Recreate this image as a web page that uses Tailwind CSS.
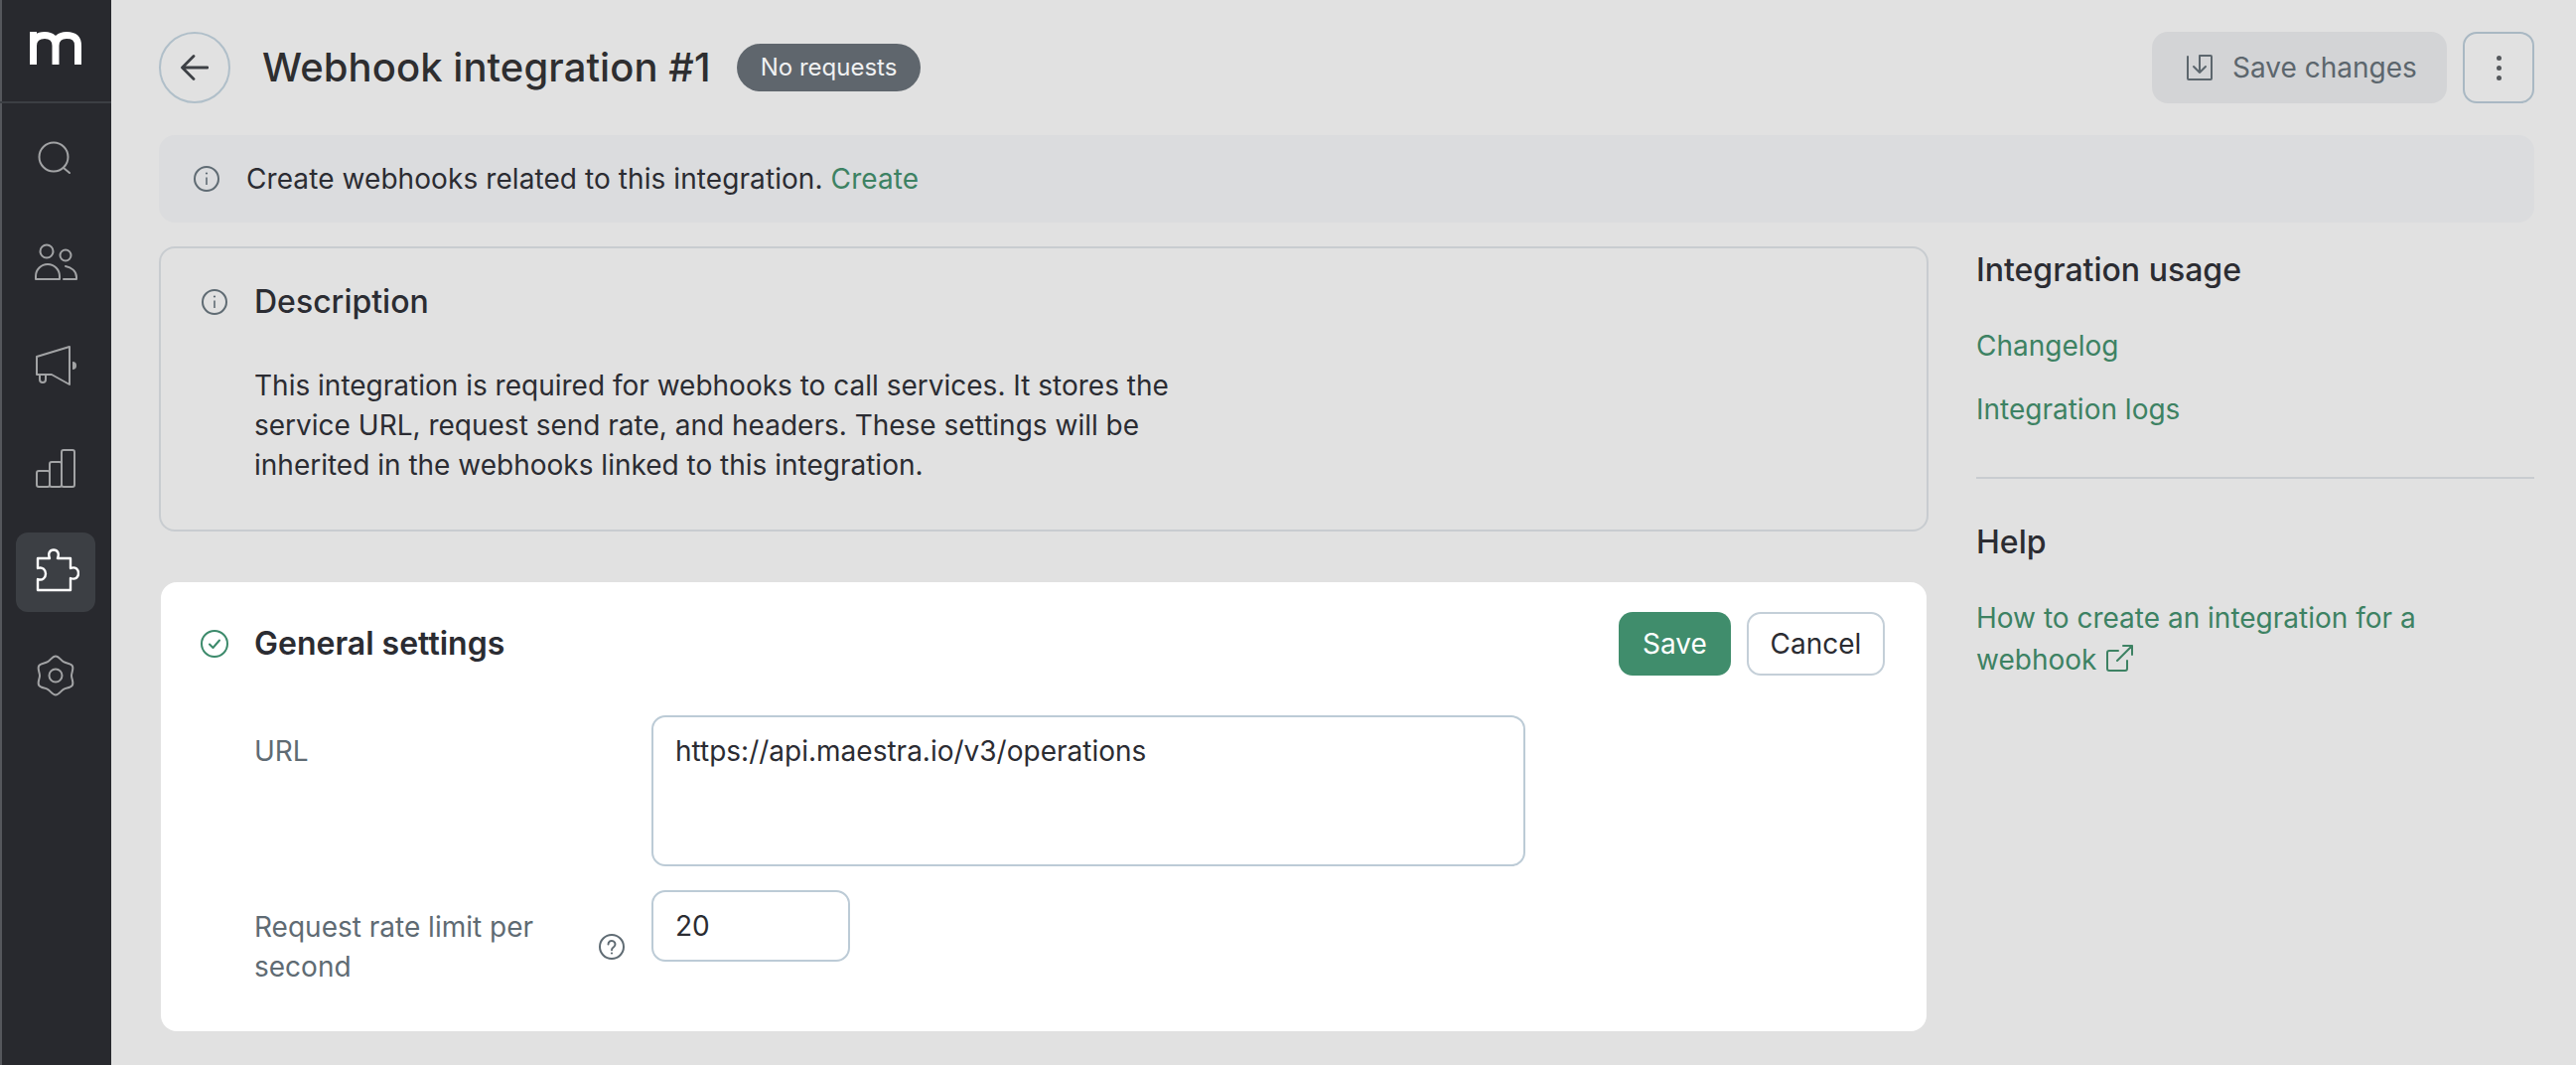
<!DOCTYPE html>
<html lang="en">
<head>
    <meta charset="UTF-8">
    <meta name="viewport" content="width=device-width, initial-scale=1.0">
    <script src="https://cdn.jsdelivr.net/npm/@tailwindcss/browser@4"></script>
    <title>Webhook integration #1</title>
</head>
<body class="font-['Inter',sans-serif] bg-[#e1e1e1] text-[#2b2c32] text-[28px] leading-[40px] h-[1072px] overflow-hidden">
    <div class="flex h-[1072px]">
        <!--sidebar-->
        <aside class="w-[112px] shrink-0 bg-[#28292e] border-l-2 border-[#55575c] flex flex-col">
            <div class="h-[104px] shrink-0 border-b-2 border-[#3c3f44] -ml-[2px] pl-[30px] pt-[32px]">
                <svg class="w-[52px] h-[33px]" viewBox="0 0 52 33" fill="none" stroke="#ffffff" stroke-width="7"><path d="M3.5 33 V0 M3.5 14 C3.5 6 9 3.5 15 3.5 C22 3.5 26 7 26 14 V33 M26 14 C26 7 30 3.5 37 3.5 C44 3.5 48.500 6 48.500 14 V33"/></svg>
            </div>
            <nav class="text-[#a2a3a5] -ml-[2px]">
                <div class="h-[64px] mt-[22px] flex justify-center items-center">
                    <svg class="w-[40px] h-[40px]" viewBox="0 0 40 40" fill="none" stroke="currentColor" stroke-width="2" stroke-linecap="round"><circle cx="18" cy="20" r="14.5"/><path d="M28 31 L34 36"/></svg>
                </div>
                <div class="h-[64px] mt-[43px] flex justify-center items-center">
                    <svg class="w-[48px] h-[48px]" viewBox="0 0 48 48" fill="none" stroke="currentColor" stroke-width="2" stroke-linecap="round" stroke-linejoin="round"><circle cx="15" cy="12" r="6.5"/><circle cx="34" cy="16" r="5.5"/><path d="M4 40 V37 a12 12 0 0 1 24 0 V40 Z"/><path d="M32 40 H45 V38 C45 32 40 28 34 27"/></svg>
                </div>
                <div class="h-[64px] mt-[39px] flex justify-center items-center">
                    <svg class="w-[48px] h-[48px]" viewBox="0 0 48 48" fill="none" stroke="currentColor" stroke-width="2" stroke-linecap="round" stroke-linejoin="round"><path d="M5 15 L38 5 V43 L20 33 H5 Z"/><path d="M8 33 V38 a3 3 0 0 0 6 0 V33"/><path d="M41 20 a4 4 0 0 1 0 8 Z" fill="currentColor" stroke="none"/></svg>
                </div>
                <div class="h-[64px] mt-[40px] flex justify-center items-center">
                    <svg class="w-[48px] h-[48px]" viewBox="0 0 48 48" fill="none" stroke="currentColor" stroke-width="2" stroke-linejoin="round"><rect x="5" y="26" width="13" height="16" rx="2"/><rect x="18" y="17" width="12" height="25" rx="2"/><rect x="30" y="5" width="13" height="37" rx="2"/></svg>
                </div>
                <div class="mx-[16px] mt-[32px] h-[80px] rounded-[12px] bg-[#3c3f44] flex justify-center items-center text-white">
                    <svg class="w-[48px] h-[48px]" viewBox="0 0 48 48" fill="none" stroke="currentColor" stroke-width="2.4" stroke-linejoin="round"><path d="M6 10 H18 C16 5 18 1.5 22 1.5 C26 1.5 28 5 26 10 H39 V20 C44 18 47 21 47 25 C47 29 44 32 39 30 V42 H6 V31 C11 33 14 29 14 25.5 C14 22 11 18 6 20 Z"/></svg>
                </div>
                <div class="h-[64px] mt-[32px] flex justify-center items-center">
                    <svg class="w-[48px] h-[48px]" viewBox="0 0 48 48" fill="none" stroke="currentColor" stroke-width="2" stroke-linejoin="round"><path d="M24 4.5 C27.2 4.5 29.23 8.54 32 10.14 C34.77 11.74 39.29 11.48 40.89 14.25 C42.49 17.02 40 20.8 40 24 C40 27.2 42.49 30.98 40.89 33.75 C39.29 36.52 34.77 36.26 32 37.86 C29.23 39.46 27.2 43.5 24 43.5 C20.8 43.5 18.77 39.46 16 37.86 C13.23 36.26 8.71 36.52 7.11 33.75 C5.51 30.98 8 27.2 8 24 C8 20.8 5.51 17.02 7.11 14.25 C8.71 11.48 13.23 11.74 16 10.14 C18.77 8.54 20.8 4.5 24 4.5 Z"/><circle cx="24" cy="24" r="6.5"/></svg>
                </div>
            </nav>
        </aside>

        <main class="flex-1 pl-[48px] pr-[42px] pt-[32px]">
            <!--header-->
            <header class="flex items-center h-[72px]">
                <button class="w-[72px] h-[72px] rounded-full border-2 border-[#b0bfc9] flex items-center justify-center text-[#3d4045]">
                    <svg class="w-[28px] h-[28px]" viewBox="0 0 28 28" fill="none" stroke="currentColor" stroke-width="2.8" stroke-linecap="round" stroke-linejoin="round"><path d="M27 14 H2 M13 2.5 L1.5 14 L13 25.5"/></svg>
                </button>
                <h1 class="ml-[32px] text-[40px] leading-[56px] tracking-[0.07px] text-[#2e2e30] font-medium">Webhook integration #1</h1>
                <span class="ml-[26px] h-[48px] px-[24px] rounded-full bg-[#5f666d] text-[#f0f1f2] text-[24px] leading-[48px]">No requests</span>
                <button class="ml-auto w-[297px] h-[72px] rounded-[16px] bg-[#d3d4d6] text-[#5c666d] flex items-center pl-[35px] gap-[20px]">
                    <svg class="w-[26px] h-[26px]" viewBox="0 0 26 26" fill="none" stroke="currentColor" stroke-width="2" stroke-linecap="round" stroke-linejoin="round"><path d="M1 2 V24 a1 1 0 0 0 1 1 H24 a1 1 0 0 0 1 -1 V2 a1 1 0 0 0 -1 -1 H13 V18 M7 12 L13 18 L19 12"/></svg>
                    <span>Save changes</span>
                </button>
                <button class="ml-[16px] w-[72px] h-[72px] rounded-[14px] border-2 border-[#a9b8c3] flex flex-col items-center justify-center gap-[5px]">
                    <span class="w-[5px] h-[5px] rounded-full bg-[#55585c]"></span>
                    <span class="w-[5px] h-[5px] rounded-full bg-[#55585c]"></span>
                    <span class="w-[5px] h-[5px] rounded-full bg-[#55585c]"></span>
                </button>
            </header>

            <!--info bar-->
            <div class="mt-[32px] h-[88px] rounded-[16px] bg-[#dbdcde] flex items-center pl-[35px] gap-[27px]">
                <svg class="w-[26px] h-[26px] text-[#5f6b73]" viewBox="0 0 26 26" fill="none" stroke="currentColor" stroke-width="2"><circle cx="13" cy="13" r="12"/><path d="M13 11.5 V19" stroke-width="1.6"/><circle cx="13" cy="7.5" r="1.1" fill="currentColor" stroke="none"/></svg>
                <p class="tracking-[0.08px]">Create webhooks related to this integration. <a class="text-[#3d8263]">Create</a></p>
            </div>

            <div class="mt-[24px] flex gap-[48px]">
                <div class="w-[1782px] shrink-0">
                    <!--description-->
                    <section class="h-[287px] rounded-[16px] border-2 border-[#c8ccd0] pl-[41px] pt-[30px]">
                        <div class="flex items-center gap-[27px]">
                            <svg class="w-[26px] h-[26px] text-[#5f6b73]" viewBox="0 0 26 26" fill="none" stroke="currentColor" stroke-width="2"><circle cx="13" cy="13" r="12"/><path d="M13 11.5 V19" stroke-width="1.6"/><circle cx="13" cy="7.5" r="1.1" fill="currentColor" stroke="none"/></svg>
                            <h2 class="text-[32px] leading-[48px] font-medium">Description</h2>
                        </div>
                        <p class="mt-[40px] ml-[53px] w-[960px]">This integration is required for webhooks to call services. It stores the service URL, request send rate, and headers. These settings will be inherited in the webhooks linked to this integration.</p>
                    </section>

                    <!--general settings-->
                    <section class="mt-[51px] mx-[2px] h-[452px] rounded-[16px] bg-white pl-[40px] pr-[42px] pt-[30px]">
                        <div class="flex items-center h-[64px]">
                            <svg class="w-[28px] h-[28px] text-[#3c8a6b]" viewBox="0 0 28 28" fill="none" stroke="currentColor" stroke-width="2" stroke-linecap="round" stroke-linejoin="round"><circle cx="14" cy="14" r="13"/><path d="M9 14.5 L12.5 18 L19 10.5"/></svg>
                            <h2 class="ml-[26px] text-[32px] leading-[48px] font-semibold">General settings</h2>
                            <button class="ml-auto w-[113px] h-[64px] rounded-[14px] bg-[#408d6c] text-white">Save</button>
                            <button class="ml-[16px] w-[139px] h-[64px] rounded-[14px] border-2 border-[#c4cfd8]">Cancel</button>
                        </div>
                        <div class="mt-[40px] ml-[54px] flex">
                            <label class="w-[400px] shrink-0 mt-[16px] text-[#5f6b73]">URL</label>
                            <textarea class="w-[880px] h-[152px] rounded-[14px] border-2 border-[#bccbd6] px-[22px] pt-[14px] resize-none outline-none">https://api.maestra.io/v3/operations</textarea>
                        </div>
                        <div class="mt-[24px] ml-[54px] flex">
                            <label class="w-[400px] shrink-0 mt-[17px] pr-[27px] flex items-center justify-between text-[#5f6b73]">
                                <span class="w-[340px]">Request rate limit per second</span>
                                <svg class="w-[26px] h-[26px]" viewBox="0 0 26 26" fill="none" stroke="currentColor" stroke-width="2" stroke-linecap="round"><circle cx="13" cy="13" r="12"/><path d="M9.5 10.5 a3.5 3.5 0 1 1 5.5 2.8 c-1.4 1-2 1.6-2 3"/><circle cx="13" cy="19.5" r="1.1" fill="currentColor" stroke="none"/></svg>
                            </label>
                            <input class="w-[200px] h-[72px] rounded-[14px] border-2 border-[#bccbd6] px-[22px] outline-none" value="20">
                        </div>
                    </section>
                </div>

                <!--right column-->
                <aside class="flex-1">
                    <h3 class="text-[32px] leading-[48px] font-medium">Integration usage</h3>
                    <a class="block mt-[32px] text-[#3d8263]">Changelog</a>
                    <a class="block mt-[24px] text-[#3d8263]">Integration logs</a>
                    <div class="mt-[48px] h-[2px] bg-[#c8ccd0]"></div>
                    <h3 class="mt-[40px] text-[32px] leading-[48px] font-medium">Help</h3>
                    <a class="block mt-[31px] w-[500px] leading-[42px] text-[#3d8263]">How to create an integration for a webhook
                        <svg class="inline-block w-[27px] h-[27px] ml-[2px] align-[-2px]" viewBox="0 0 27 27" fill="none" stroke="currentColor" stroke-width="2" stroke-linecap="round" stroke-linejoin="round"><path d="M12 6 H3 a2 2 0 0 0 -2 2 V24 a2 2 0 0 0 2 2 H19 a2 2 0 0 0 2 -2 V16 M11 16 L26 1 M17 1 H26 V10"/></svg>
                    </a>
                </aside>
            </div>
        </main>
    </div>
</body>
</html>
